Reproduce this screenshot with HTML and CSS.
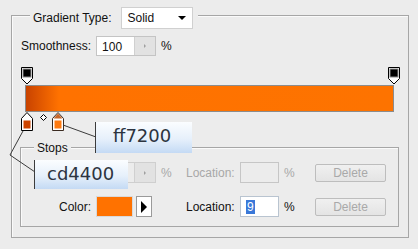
FILE: index.html
```html
<!DOCTYPE html>
<html lang="en">
<head>
  <meta charset="UTF-8">
  <title>Gradient Editor</title>
  <link rel="stylesheet" href="styles.css">
</head>
<body>
  <div class="dialog">
    <div class="group outer">
      <div class="group-head">
        <span class="label">Gradient Type:</span>
        <div class="select">
          <span>Solid</span>
          <span class="select-arrow"></span>
        </div>
      </div>

      <div class="smooth-row">
        <span class="label">Smoothness:</span>
        <div class="spin-input">
          <span class="spin-value">100</span>
          <span class="spin-btn"><span class="spin-tri"></span></span>
        </div>
        <span class="unit">%</span>
      </div>

      <!-- gradient ramp with stops -->
      <div class="ramp">
        <div class="ramp-top">
          <svg class="stop" style="left: -4px" width="12" height="18" viewBox="0 0 12 18">
            <path d="M0.5 0.5h11v11l-5.5 5.5-5.5-5.5z" fill="#fff" stroke="#000"/>
            <rect x="1.5" y="1.5" width="9" height="9" fill="#8a8a8a"/>
            <rect x="2.5" y="2.5" width="7" height="7" fill="#000"/>
          </svg>
          <svg class="stop" style="left: 363px" width="12" height="18" viewBox="0 0 12 18">
            <path d="M0.5 0.5h11v11l-5.5 5.5-5.5-5.5z" fill="#fff" stroke="#000"/>
            <rect x="1.5" y="1.5" width="9" height="9" fill="#8a8a8a"/>
            <rect x="2.5" y="2.5" width="7" height="7" fill="#000"/>
          </svg>
        </div>
        <div class="bar"></div>
        <div class="ramp-bottom">
          <svg class="stop" style="left: -4px" width="12" height="19" viewBox="0 0 12 19">
            <path d="M6 0.5l5.5 6v12h-11v-12z" fill="#fff" stroke="#000"/>
            <rect x="1.5" y="7.5" width="9" height="10" fill="#fff"/>
            <rect x="2.5" y="8.5" width="7" height="8" fill="#cd4400"/>
          </svg>
          <svg class="midpoint" style="left: 15px" width="7" height="7" viewBox="0 0 7 7">
            <path d="M3.5 0.5l3 3-3 3-3-3z" fill="#fff" stroke="#000"/>
          </svg>
          <svg class="stop" style="left: 27px" width="12" height="19" viewBox="0 0 12 19">
            <path d="M6 0.5l5.5 6v12h-11v-12z" fill="#fff" stroke="#3a2a20"/>
            <path d="M6 1.5l4.5 5h-9z" fill="#c8662a"/>
            <rect x="2.5" y="8.5" width="7" height="8" fill="#ff7a10"/>
          </svg>
        </div>
      </div>

      <div class="group stops">
        <div class="group-head stops-head">Stops</div>
        <div class="stop-grid">
          <span class="label"></span>
          <div class="spin-input disabled">
            <span class="spin-value"></span>
            <span class="spin-btn"><span class="spin-tri"></span></span>
          </div>
          <span class="unit disabled">%</span>
          <span class="label disabled">Location:</span>
          <div class="field disabled"></div>
          <span class="unit disabled">%</span>
          <button class="btn" disabled>Delete</button>

          <span class="label right">Color:</span>
          <div class="color-pick">
            <span class="swatch"></span>
            <span class="pick-btn"><span class="pick-tri"></span></span>
          </div>
          <span class="unit"></span>
          <span class="label">Location:</span>
          <div class="field"><span class="sel">9</span></div>
          <span class="unit">%</span>
          <button class="btn" disabled>Delete</button>
        </div>
      </div>
    </div>

    <!-- hex callouts over the dialog -->
    <svg class="leaders" width="418" height="249">
      <path d="M63 125L96 137" stroke="#3c3c3c" fill="none"/>
      <path d="M23 131L10 155L35 172" stroke="#3c3c3c" fill="none"/>
    </svg>
    <div class="callout callout-a">ff7200</div>
    <div class="callout callout-b">cd4400</div>
  </div>
</body>
</html>
```

FILE: styles.css
```css
* {
  margin: 0;
  padding: 0;
  box-sizing: border-box;
}

body {
  background-color: #ececec;
  font-family: "Liberation Sans", Arial, sans-serif;
  font-size: 12px;
  color: #111;
}

.dialog {
  position: relative;
  width: 418px;
  height: 249px;
  padding-top: 15px;
}

/* etched group boxes */
.group {
  border: 1px solid #a6a6a6;
  box-shadow: inset 1px 1px 0 #fafafa;
}

.group-head {
  display: flex;
  align-items: center;
  width: fit-content;
  background-color: #ececec;
}

.outer {
  margin-left: 11px;
  width: 398px;
  height: 223px;
}

.outer > .group-head {
  margin: -9px 0 0 18px;
  padding: 0 5px 0 3px;
  gap: 9px;
}

.select {
  display: flex;
  align-items: center;
  justify-content: space-between;
  width: 72px;
  height: 22px;
  padding: 0 6px;
  background-color: #fff;
  border: 1px solid #d0d0d0;
}

.select-arrow {
  width: 0;
  height: 0;
  border-left: 4px solid transparent;
  border-right: 4px solid transparent;
  border-top: 4px solid #000;
}

.smooth-row {
  display: flex;
  align-items: center;
  gap: 5px;
  margin: 7px 0 0 9px;
  height: 20px;
}

.spin-input {
  display: flex;
  width: 60px;
  height: 20px;
  background-color: #fff;
  border: 1px solid #c4c4c4;
}

.spin-value {
  flex: 1;
  padding: 3px 0 0 5px;
}

.spin-btn {
  display: flex;
  align-items: center;
  justify-content: center;
  width: 21px;
  background-color: #e2e2e2;
  border-left: 1px solid #d0d0d0;
}

.spin-tri {
  width: 0;
  height: 0;
  border-top: 2px solid transparent;
  border-bottom: 2px solid transparent;
  border-left: 2px solid #a0a0a0;
}

.spin-input.disabled {
  background-color: #ececec;
  border-color: #cfcfcf;
}

.unit {
  padding-left: 5px;
}

.smooth-row .unit {
  padding-left: 0;
}

/* gradient ramp */
.ramp {
  margin: 11px 0 0 13px;
  width: 369px;
}

.ramp-top,
.ramp-bottom {
  position: relative;
  height: 18px;
}

.stop {
  position: absolute;
  top: 0;
  display: block;
}

.midpoint {
  position: absolute;
  top: 2px;
}

.bar {
  height: 27px;
  border: 1px solid #8c8c8c;
  background: linear-gradient(to right, #c94300 0%, #ff7200 9%, #fd7300 100%);
}

/* stops group */
.stops {
  margin: 17px 0 0 8px;
  width: 379px;
  padding-bottom: 9px;
}

.stops-head {
  margin: -8px 0 0 13px;
  padding: 0 3px;
  height: 15px;
}

.stop-grid {
  display: grid;
  grid-template-columns: 70px 65px 30px 54px 39px 36px 71px;
  grid-auto-rows: 21px;
  row-gap: 13px;
  align-items: center;
  margin-top: 7px;
}

.stop-grid > .spin-input,
.stop-grid > .color-pick {
  margin-left: 5px;
}

.stop-grid .spin-input {
  height: 21px;
  width: 60px;
}

.label.right {
  text-align: right;
}

.disabled {
  color: #a8a8a8;
}

.field {
  height: 21px;
  padding: 3px 0 0 5px;
  background-color: #fff;
  border: 1px solid #b9c4d0;
}

.field.disabled {
  background-color: #ececec;
  border-color: #c6c6c6;
}

.sel {
  background-color: #3a78d8;
  color: #fff;
  padding: 0 1px;
}

.btn {
  width: 71px;
  height: 18px;
  font-family: "Liberation Sans", Arial, sans-serif;
  font-size: 12px;
  color: #a9a9a9;
  background: linear-gradient(#f0f0f0, #e4e4e4);
  border: 1px solid #bdbdbd;
  border-radius: 2px;
}

.color-pick {
  display: flex;
  gap: 3px;
  height: 21px;
}

.swatch {
  width: 37px;
  background-color: #ff7200;
  border: 1px solid #d9d9d9;
}

.pick-btn {
  display: flex;
  align-items: center;
  justify-content: center;
  width: 16px;
  background-color: #fff;
  border: 1px solid #9a9a9a;
}

.pick-tri {
  width: 0;
  height: 0;
  border-top: 6px solid transparent;
  border-bottom: 6px solid transparent;
  border-left: 6px solid #000;
}

/* callouts */
.leaders {
  position: absolute;
  top: 0;
  left: 0;
}

.callout {
  position: absolute;
  font-family: "DejaVu Sans", Verdana, sans-serif;
  font-size: 18px;
  line-height: 28px;
  color: #2c3440;
  background: linear-gradient(#fbfdff 0%, #e6f0fb 55%, #c4daf4 100%);
  border-left: 1px solid #3c3c3c;
}

.callout-a {
  left: 95px;
  top: 122px;
  width: 97px;
  height: 31px;
  padding-left: 17px;
}

.callout-b {
  left: 34px;
  top: 160px;
  width: 94px;
  height: 29px;
  padding-left: 12px;
}
```
